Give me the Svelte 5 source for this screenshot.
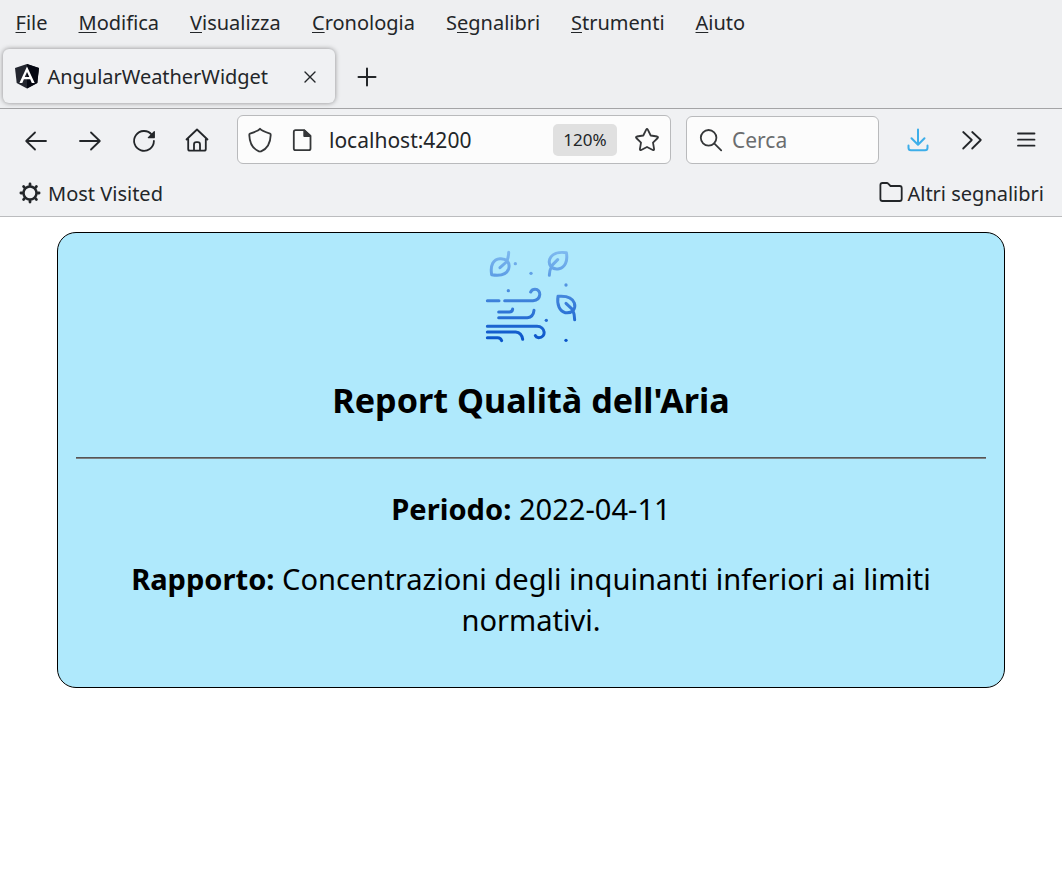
<script>
  const menu = [
    ['', 'F', 'ile', 63],
    ['', 'M', 'odifica', 111.5],
    ['', 'V', 'isualizza', 122],
    ['', 'C', 'ronologia', 134],
    ['S', 'e', 'gnalibri', 125],
    ['', 'S', 'trumenti', 124.5],
    ['', 'A', 'iuto', 60],
  ];
</script>

<div class="window">
  <header>
    <nav class="menu">
      {#each menu as [pre, key, post, width]}
        <span style="width: {width}px">{pre}<span class="key">{key}</span>{post}</span>
      {/each}
    </nav>
    <div class="tabs">
      <div class="tab">
        <svg class="logo" width="26" height="26" viewBox="0 0 26 26">
          <path d="M13 1 25 5 23.3 20 13 25.5 2.7 20 1 5z" fill="#23262f" />
          <path d="M13 1 25 5 23.3 20 13 25.5z" fill="#050812" />
          <path fill-rule="evenodd" d="M13 3.6 5.4 20h2.9l1.6-3.7h6.3l1.6 3.7h2.9zM13 9l2.3 5h-4.6z" fill="#fff" />
        </svg>
        <span class="title">AngularWeatherWidget</span>
        <svg width="14" height="14" viewBox="0 0 14 14"><path d="M2 2l10 10M12 2 2 12" /></svg>
      </div>
      <svg class="plus" width="20" height="20" viewBox="0 0 20 20"><path d="M10 1.5v17M1.5 10h17" /></svg>
    </div>
  </header>

  <div class="toolbar">
    <div class="buttons">
      <svg width="24" height="24" viewBox="0 0 24 24"><path d="M22 12H2.5M11 3.5 2.2 12l8.8 8.5" /></svg>
      <svg width="24" height="24" viewBox="0 0 24 24"><path d="M2 12h19.5M13 3.5l8.8 8.5-8.8 8.5" /></svg>
      <svg width="24" height="24" viewBox="0 0 24 24"><path d="M19.8 5.8A9.9 9.9 0 1 0 21.9 12" /><path d="M22.3 2.6v6h-6z" fill="#232629" stroke-width="1.2" /></svg>
      <svg class="home" width="24" height="24" viewBox="0 0 24 24"><path d="M1.500 11.500 12 1.500l10.500 10M3.200 10v11q0 1.700 1.700 1.700h14.200q1.700 0 1.700-1.700V10M9 22.500v-6q0-2.300 2.300-2.300h1.400q2.300 0 2.300 2.300v6" /></svg>
    </div>
    <div class="field url">
      <svg width="24" height="26" viewBox="0 0 24 26"><path d="M12 1.800Q13.600 4 22 6.600q.8.300.7 1.500c-.3 8-3.200 13.600-9.600 16.200q-1.100.5-2.200 0C4.500 21.700 1.600 16.100 1.300 8.100q-.1-1.200.7-1.500Q10.400 4 12 1.800z" /></svg>
      <svg class="page" width="20" height="24" viewBox="0 0 20 24"><path d="M3.500 2.200h8.700L18.500 8v12.500q0 1.700-1.700 1.700H3.500q-1.700 0-1.700-1.700V3.900q0-1.700 1.700-1.700z" /><path d="M12.200 2.500V8h6z" fill="#353739" /></svg>
      <span class="address">localhost:4200</span>
      <span class="zoom">120%</span>
      <svg class="star" width="26" height="26" viewBox="0 0 26 26"><path d="M12.200 2.600q.8-1.300 1.600 0l2.900 5.900 6.500 1q1.400.4.500 1.500L19 15.600l1.100 6.500q.1 1.500-1.300.9L13 20l-5.800 3q-1.400.6-1.300-.9L7 15.600 2.300 11q-.9-1.100.5-1.500l6.500-1z" /></svg>
    </div>
    <div class="field search">
      <svg width="24" height="24" viewBox="0 0 24 24"><circle cx="9.600" cy="9.800" r="7.800" /><path d="m15.200 15.300 7 7" /></svg>
      <span>Cerca</span>
    </div>
    <div class="actions">
      <svg class="download" width="24" height="24" viewBox="0 0 24 24"><path d="M12 1.500v15M5.500 10.200 12 16.700l6.500-6.500M2.500 17.500v2.200q0 2.500 2.500 2.500h14q2.500 0 2.500-2.500v-2.200" /></svg>
      <svg width="24" height="24" viewBox="0 0 24 24"><path d="m3.200 4 8.600 8-8.600 8.500M12.200 4l8.600 8-8.600 8.500" /></svg>
      <svg width="24" height="24" viewBox="0 0 24 24"><path d="M4 5.500h16.500M4 11.700h16.500M4 17.700h16.500" /></svg>
    </div>
  </div>

  <div class="bookmarks">
    <span class="mark">
      <svg width="22" height="22" viewBox="0 0 22 22">
        <circle cx="11" cy="11" r="6.500" stroke-width="2.500" />
        <path stroke-width="2.800" d="M11 3.300V1.900M11 18.700v1.400M3.300 11H1.900M18.700 11h1.400M5.400 5.400l-.8-.8M16.600 5.400l.8-.8M5.400 16.600l-.8.8M16.600 16.600l.8.8" />
      </svg>
      Most Visited
    </span>
    <span class="mark other">
      <svg width="24" height="22" viewBox="0 0 24 22"><path d="M3.400 2h4.400q.8 0 1.400.7L11.500 5h9.200q2 0 2 2v11q0 2-2 2H3.400q-2 0-2-2V4q0-2 2-2z" /></svg>
      Altri segnalibri
    </span>
  </div>

  <main>
    <section class="card">
      <svg class="wind" width="110" height="110" viewBox="0 0 330 330">
        <defs>
          <linearGradient id="air" gradientUnits="userSpaceOnUse" x1="0" y1="30" x2="0" y2="300">
            <stop offset="0" stop-color="#80bbf0" />
            <stop offset="1" stop-color="#0a55ca" />
          </linearGradient>
        </defs>
        <g fill="none" stroke="url(#air)" stroke-width="9">
          <path d="M47 104C42 76 52 57 72 56Q86 55 94 63Q102 73 98 86C92 103 72 108 47 104zM72 83 91 66Q98 53 98 37" />
          <path d="M271 38C276 63 267 82 249 86Q234 89 225 80Q217 71 221 58C227 41 248 35 271 38zM245 59 228 76Q220 91 220 106" />
          <path d="M246 169C242 194 251 214 268 218Q283 220 292 211Q299 201 295 189C289 173 269 167 246 169zM270 190 290 209Q296 224 296 239" />
          <path d="M34 182.010H69M86 182H171C197 180 197 148 177 148Q168 148 164 156" />
          <path d="M68 216H100Q109 216 110 207M68 233.500H154Q172 231 174 211" />
          <path d="M34 258.500H183C209 259 212 293 188 293Q180 292 178 287M34 276H119Q137 278 140 298M34 293H65Q74 293 77 302" />
        </g>
        <g fill="url(#air)" stroke="none">
          {#each [[118, 71], [165, 100], [97, 152], [270, 135], [211, 241], [270, 301]] as [x, y]}
            <circle cx={x} cy={y} r="5" />
          {/each}
        </g>
      </svg>
      <h3>Report Qualità dell'Aria</h3>
      <hr />
      <p><b>Periodo:</b> 2022-04-11</p>
      <p><b>Rapporto:</b> Concentrazioni degli inquinanti inferiori ai limiti normativi.</p>
    </section>
  </main>
</div>

<style>
  :global(body) { margin: 0; background: #fff; }
  .window { height: 879px; overflow: hidden; font: 20px/28px "Noto Sans", sans-serif; color: #232629; box-sizing: border-box; }
  .window * { box-sizing: border-box; }
  svg { display: block; flex: none; fill: none; stroke: #232629; stroke-width: 1.8; stroke-linecap: round; stroke-linejoin: round; }
  header { height: 109px; background: #eeeff1; border-bottom: 1px solid #a4a4a6; }
  .menu { display: flex; height: 45px; padding: 9px 0 0 15.500px; white-space: nowrap; }
  .menu > span { flex: none; }
  .key { text-decoration: underline; text-decoration-thickness: 1px; text-underline-offset: 2px; text-decoration-skip-ink: none; }
  .tabs { display: flex; align-items: center; padding: 4px 0 0 3px; }
  .tab { display: flex; align-items: center; width: 332px; height: 54px; padding: 2px 18px 0 11px; border-radius: 6px; background: #f0f1f3; box-shadow: 0 0 5px rgba(0, 0, 0, .42); }
  .tab svg:last-child { stroke-width: 1.4; margin-bottom: 1px; }
  .logo { stroke: none; margin-bottom: 2px; }
  .title { flex: 1; padding-left: 7.500px; letter-spacing: -.03px; }
  .plus { margin: 2px 0 0 22px; stroke-width: 2; }
  .toolbar { display: flex; height: 62px; padding: 6px 24px 0; background: #f0f1f3; }
  .buttons { display: flex; align-items: center; gap: 30px; height: 51px; width: 213px; }
  .home { margin: 0 0 1px -1px; }
  .field { display: flex; align-items: center; background: #fcfcfc; border: 1px solid #b9babc; border-radius: 6px; height: 49px; font-size: 21px; }
  .field svg { stroke: #353739; stroke-width: 1.8; }
  .url { width: 434px; padding: 0 10px 0 10px; }
  .page { margin-left: 20px; }
  .address { flex: 1; padding-left: 17px; font-size: 21px; }
  .zoom { width: 64px; height: 32px; line-height: 31px; border-radius: 5px; text-align: center; background: #e0e0e0; font-size: 17px; }
  .star { margin-left: 17px; }
  .search { width: 193px; height: 48px; margin: 1px 0 0 15px; padding-left: 12px; color: #6b6d6f; }
  .search span { padding-left: 9px; }
  .actions { display: flex; align-items: center; gap: 30px; height: 49px; margin-left: 26.500px; }
  .download { stroke: #3daee9; stroke-width: 2; }
  .bookmarks { display: flex; justify-content: space-between; height: 46px; padding: 0 18px 0 19px; background: #f0f1f3; border-bottom: 1px solid #bbbcbe; }
  .mark { display: flex; align-items: center; gap: 7px; height: 45px; }
  .mark svg { margin-bottom: 1px; }
  .other { gap: 4.500px; }
  .other svg { margin-bottom: 3px; }
  main { padding: 15px 57px; color: #000; }
  .card { height: 456px; padding: 7px 18px; border: 1px solid #000; border-radius: 19px; background: #afe9fc; text-align: center; font-size: 29.080px; line-height: 41px; }
  .wind { margin: 0 auto; }
  h3 { margin: 26px 0 0; font-size: 34.150px; line-height: 48px; }
  hr { height: 2px; margin: 33px 0 0; border: 0; border-top: 1px solid #555; border-bottom: 1px solid #7d8184; }
  p { margin: 30px 0 0; }
  p + p { margin-top: 29px; }
</style>
